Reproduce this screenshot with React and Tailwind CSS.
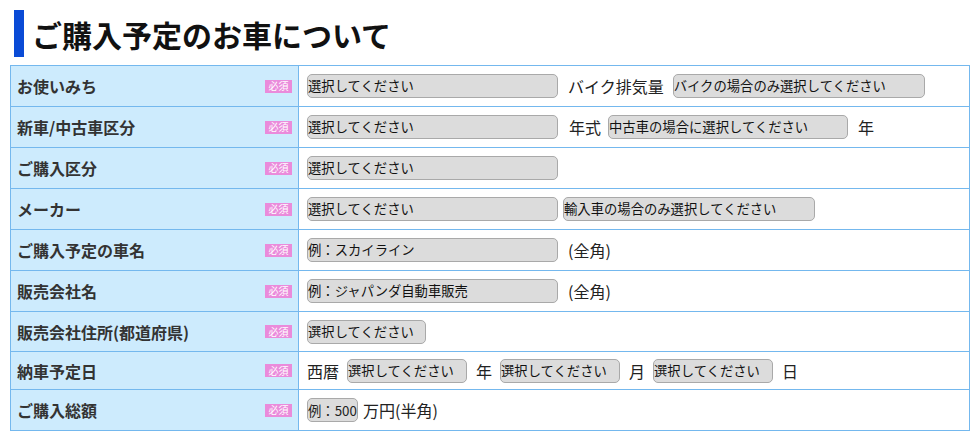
import React from 'react';

const FONT = { fontFamily: '"Noto Sans CJK JP", "Noto Sans", sans-serif' };

// セレクト風の入力欄
const Select = ({ text, className = '' }) => (
  <select
    className={`appearance-none h-[24px] rounded-[5px] border border-[#a9a9a9] bg-[#dcdcdc] pl-0 pr-1 text-[13.33px] leading-none text-[#111] outline-none ${className}`}
    defaultValue=""
  >
    <option value="">{text}</option>
  </select>
);

const Text = ({ children, className = '' }) => (
  <span className={`text-[16px] leading-none text-[#222] ${className}`}>{children}</span>
);

const Row = ({ label, height, first, children }) => (
  <div className={`flex ${height} ${first ? '' : 'border-t border-[#74b8ee]'}`}>
    <div className="flex w-[288px] shrink-0 items-center justify-between border-r border-[#74b8ee] bg-[#cdebfd] pl-[6px] pr-[6px]">
      <span className="text-[16px] font-bold text-[#333]">{label}</span>
      <span className="flex h-[13px] w-[27px] items-center justify-center bg-[#ea8bdb] text-[10px] leading-none text-white">必須</span>
    </div>
    <div className="flex flex-1 items-center pl-[8px]">{children}</div>
  </div>
);

export default function App() {
  return (
    <div className="min-h-screen bg-white pt-[10px]" style={FONT}>
      <div className="flex h-[47px] items-center pl-[14px]">
        <div className="h-[47px] w-[10px] bg-[#0a4bd6]" />
        <h2 className="ml-[8px] text-[30px] font-bold leading-none text-[#111]">ご購入予定のお車について</h2>
      </div>

      <div className="ml-[10px] mt-[8px] w-[960px] border border-[#74b8ee]">
        <Row label="お使いみち" height="h-[40px]" first>
          <Select text="選択してください" className="w-[251px]" />
          <Text className="ml-[10px]">バイク排気量</Text>
          <Select text="バイクの場合のみ選択してください" className="ml-[9px] w-[252px]" />
        </Row>
        <Row label="新車/中古車区分" height="h-[41px]">
          <Select text="選択してください" className="w-[251px]" />
          <Text className="ml-[11px]">年式</Text>
          <Select text="中古車の場合に選択してください" className="ml-[7px] w-[240px]" />
          <Text className="ml-[10px]">年</Text>
        </Row>
        <Row label="ご購入区分" height="h-[41px]">
          <Select text="選択してください" className="w-[251px]" />
        </Row>
        <Row label="メーカー" height="h-[41px]">
          <Select text="選択してください" className="w-[251px]" />
          <Select text="輸入車の場合のみ選択してください" className="ml-[5px] w-[252px]" />
        </Row>
        <Row label="ご購入予定の車名" height="h-[41px]">
          <Select text="例：スカイライン" className="w-[251px]" />
          <Text className="ml-[10px]">(全角)</Text>
        </Row>
        <Row label="販売会社名" height="h-[41px]">
          <Select text="例：ジャパンダ自動車販売" className="w-[251px]" />
          <Text className="ml-[10px]">(全角)</Text>
        </Row>
        <Row label="販売会社住所(都道府県)" height="h-[40px]">
          <Select text="選択してください" className="w-[119px]" />
        </Row>
        <Row label="納車予定日" height="h-[38px]">
          <Text>西暦</Text>
          <Select text="選択してください" className="ml-[8px] w-[120px]" />
          <Text className="ml-[9px]">年</Text>
          <Select text="選択してください" className="ml-[8px] w-[120px]" />
          <Text className="ml-[9px]">月</Text>
          <Select text="選択してください" className="ml-[8px] w-[120px]" />
          <Text className="ml-[9px]">日</Text>
        </Row>
        <Row label="ご購入総額" height="h-[41px]">
          <input
            type="text"
            placeholder="例：500"
            className="h-[24px] w-[51px] rounded-[5px] border border-[#a9a9a9] bg-[#dcdcdc] pl-0 text-[13.33px] text-[#111] outline-none placeholder:text-[#222]"
          />
          <Text className="ml-[5px]">万円(半角)</Text>
        </Row>
      </div>
    </div>
  );
}
